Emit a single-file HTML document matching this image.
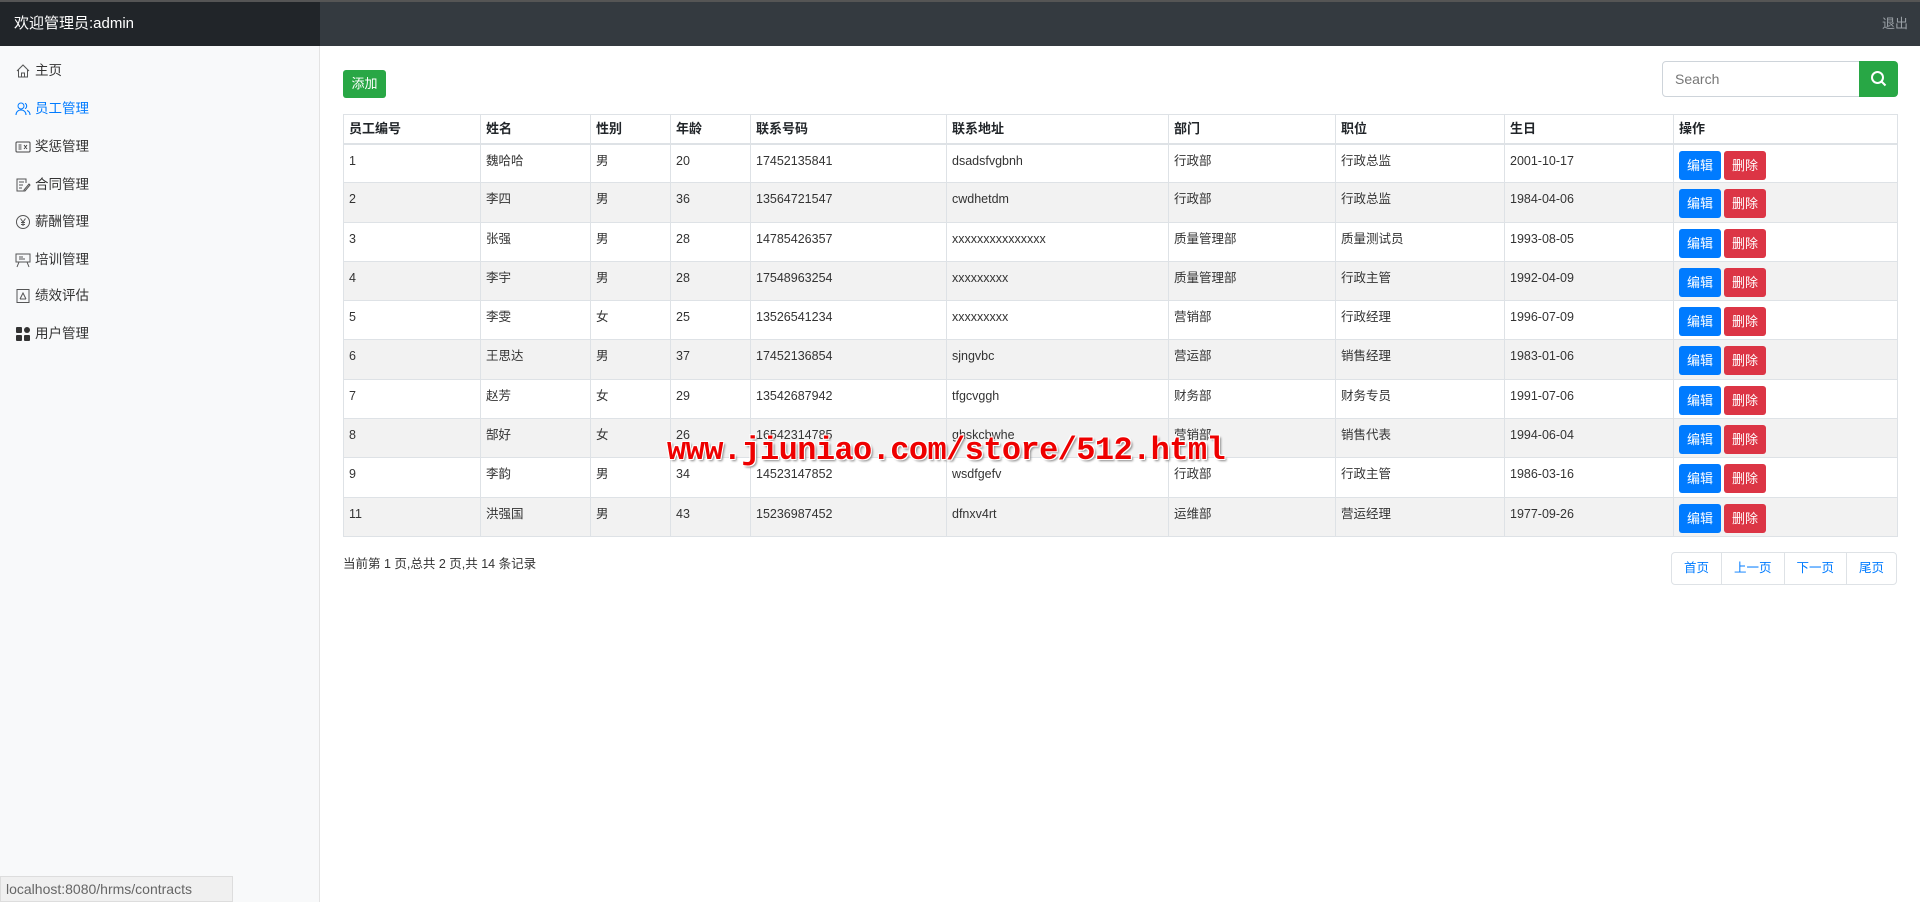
<!DOCTYPE html>
<html><head><meta charset="utf-8"><style>
*{box-sizing:border-box;margin:0;padding:0}
body{width:1920px;height:902px;overflow:hidden;background:#fff;font-family:"Liberation Sans","Noto Sans CJK SC",sans-serif;color:#212529;position:relative}
.top{position:absolute;left:0;top:0;width:1920px;height:46px;background:#343a40;border-top:2px solid #555}
.brand{position:absolute;left:0;top:0;width:320px;height:44px;background:#212529;color:#fff;font-size:15px;line-height:44px;padding-left:14px}
.logout{position:absolute;right:12px;top:0;line-height:44px;color:#9aa0a6;font-size:13px}
.side{position:absolute;left:0;top:46px;width:320px;height:856px;background:#f8f9fa;border-right:1px solid #e3e3e3}
.item{position:absolute;left:15px;font-size:13.5px;color:#333;height:20px;line-height:20px;display:flex;align-items:center}
.item svg{width:16px;height:16px;margin-right:4px}
.item.act{color:#007bff}
.add{position:absolute;left:343px;top:70px;width:43px;height:28px;background:#28a745;color:#fff;font-size:13px;line-height:28px;text-align:center;border-radius:3px}
.search{position:absolute;left:1662px;top:61px;width:198px;height:36px;border:1px solid #ced4da;border-radius:4px 0 0 4px;color:#777;font-size:14px;line-height:34px;padding-left:12px}
.sbtn{position:absolute;left:1859px;top:61px;width:39px;height:36px;background:#28a745;border-radius:0 4px 4px 0}
table{position:absolute;left:343px;top:114px;width:1555px;border-collapse:collapse;font-size:12.5px}
th,td{border:1px solid #dee2e6;text-align:left;padding:0 5px;vertical-align:top;line-height:18px}
th{height:29px;padding-top:5px;font-weight:bold;font-size:13px;border-bottom:2px solid #dee2e6}
td{height:39.3px;padding-top:7px;color:#333}
tr:nth-child(odd) td{background:#f2f2f2}
.b{display:inline-block;height:29px;width:42px;line-height:29px;text-align:center;color:#fff;border-radius:3px;font-size:13px;margin-top:-1px}
.e{background:#007bff}.d{background:#dc3545;margin-left:3px}
.info{position:absolute;left:343px;top:553px;font-size:12.5px;color:#333}
.pg{position:absolute;left:1671px;top:552px;height:33px;display:flex;border:1px solid #dee2e6;border-radius:4px}
.pg span{padding:0 12px;line-height:31px;font-size:12.5px;color:#007bff;border-left:1px solid #dee2e6}
.pg span:first-child{border-left:0}
.status{position:absolute;left:0;top:876px;width:233px;height:26px;background:#f0f0f0;border:1px solid #ddd;color:#666;font-size:14px;line-height:24px;padding-left:5px}
.wm{position:absolute;left:667px;top:432px;font-size:32px;font-weight:bold;color:#e00;letter-spacing:-0.6px;text-shadow:-1px -1px 0 #fff,1px -1px 0 #fff,-1px 1px 0 #fff,1px 1px 0 #fff,2px 2px 2px #888;font-family:"Liberation Mono",monospace}
</style></head><body>
<div class="top"><div class="brand">欢迎管理员:admin</div><div class="logout">退出</div></div>
<div class="side">
<div class="item" style="top:15px"><svg viewBox="0 0 16 16" fill="none" stroke="#555"><path d="M2 8L8 2l6 6M3.5 7v7h9V7M6.5 14v-4h3v4"/></svg>主页</div>
<div class="item act" style="top:53px"><svg viewBox="0 0 16 16" fill="none" stroke="#007bff"><circle cx="6" cy="5" r="3"/><path d="M1 14c0-3 2-5 5-5s5 2 5 5M10 2.3a3 3 0 010 5.4M12 9.5c2 .8 3 2.5 3 4.5"/></svg>员工管理</div>
<div class="item" style="top:91px"><svg viewBox="0 0 16 16" fill="none" stroke="#444"><rect x="1" y="3" width="14" height="10" rx="1"/><path d="M3.5 6h3M3.5 8h3M3.5 10h3M9 6l3 4M12 6l-3 4"/></svg>奖惩管理</div>
<div class="item" style="top:129px"><svg viewBox="0 0 16 16" fill="none" stroke="#555"><path d="M10 14H2V2h9v4M4 5h5M4 8h4M4 11h3M9 13l5-6 1 1-5 6H9z"/></svg>合同管理</div>
<div class="item" style="top:166px"><svg viewBox="0 0 16 16" fill="none" stroke="#555"><circle cx="8" cy="8" r="6.5"/><path d="M5.5 4.5L8 8l2.5-3.5M8 8v4M6 8.5h4M6 10.5h4"/></svg>薪酬管理</div>
<div class="item" style="top:204px"><svg viewBox="0 0 16 16" fill="none" stroke="#555"><path d="M1 2h14v8H1zM4 10l-2 5M12 10l2 5M4 5h4M4 7h6"/></svg>培训管理</div>
<div class="item" style="top:240px"><svg viewBox="0 0 16 16" fill="none" stroke="#555"><rect x="2" y="1.5" width="12" height="13"/><path d="M5 11h6M5 11l3-6 3 6"/></svg>绩效评估</div>
<div class="item" style="top:278px"><svg viewBox="0 0 16 16" fill="#333"><rect x="1" y="1" width="6" height="6" rx="1"/><rect x="1" y="9" width="6" height="6" rx="1"/><rect x="9" y="9" width="6" height="6" rx="1"/><circle cx="12" cy="4" r="3"/></svg>用户管理</div>
</div>
<div class="add">添加</div>
<div class="search">Search</div>
<div class="sbtn"><svg width="39" height="36" viewBox="0 0 39 36" fill="none" stroke="#fff" stroke-width="2"><circle cx="18.5" cy="16.5" r="5.5"/><path d="M22.5 20.5l4 4"/></svg></div>
<table>
<colgroup><col style="width:137px"><col style="width:110px"><col style="width:80px"><col style="width:80px"><col style="width:196px"><col style="width:222px"><col style="width:167px"><col style="width:169px"><col style="width:169px"><col></colgroup>
<tr><th>员工编号</th><th>姓名</th><th>性别</th><th>年龄</th><th>联系号码</th><th>联系地址</th><th>部门</th><th>职位</th><th>生日</th><th>操作</th></tr>
<tr><td>1</td><td>魏哈哈</td><td>男</td><td>20</td><td>17452135841</td><td>dsadsfvgbnh</td><td>行政部</td><td>行政总监</td><td>2001-10-17</td><td><span class="b e">编辑</span><span class="b d">删除</span></td></tr>
<tr><td>2</td><td>李四</td><td>男</td><td>36</td><td>13564721547</td><td>cwdhetdm</td><td>行政部</td><td>行政总监</td><td>1984-04-06</td><td><span class="b e">编辑</span><span class="b d">删除</span></td></tr>
<tr><td>3</td><td>张强</td><td>男</td><td>28</td><td>14785426357</td><td>xxxxxxxxxxxxxxx</td><td>质量管理部</td><td>质量测试员</td><td>1993-08-05</td><td><span class="b e">编辑</span><span class="b d">删除</span></td></tr>
<tr><td>4</td><td>李宇</td><td>男</td><td>28</td><td>17548963254</td><td>xxxxxxxxx</td><td>质量管理部</td><td>行政主管</td><td>1992-04-09</td><td><span class="b e">编辑</span><span class="b d">删除</span></td></tr>
<tr><td>5</td><td>李雯</td><td>女</td><td>25</td><td>13526541234</td><td>xxxxxxxxx</td><td>营销部</td><td>行政经理</td><td>1996-07-09</td><td><span class="b e">编辑</span><span class="b d">删除</span></td></tr>
<tr><td>6</td><td>王思达</td><td>男</td><td>37</td><td>17452136854</td><td>sjngvbc</td><td>营运部</td><td>销售经理</td><td>1983-01-06</td><td><span class="b e">编辑</span><span class="b d">删除</span></td></tr>
<tr><td>7</td><td>赵芳</td><td>女</td><td>29</td><td>13542687942</td><td>tfgcvggh</td><td>财务部</td><td>财务专员</td><td>1991-07-06</td><td><span class="b e">编辑</span><span class="b d">删除</span></td></tr>
<tr><td>8</td><td>郜好</td><td>女</td><td>26</td><td>16542314785</td><td>ghskcbwhe</td><td>营销部</td><td>销售代表</td><td>1994-06-04</td><td><span class="b e">编辑</span><span class="b d">删除</span></td></tr>
<tr><td>9</td><td>李韵</td><td>男</td><td>34</td><td>14523147852</td><td>wsdfgefv</td><td>行政部</td><td>行政主管</td><td>1986-03-16</td><td><span class="b e">编辑</span><span class="b d">删除</span></td></tr>
<tr><td>11</td><td>洪强国</td><td>男</td><td>43</td><td>15236987452</td><td>dfnxv4rt</td><td>运维部</td><td>营运经理</td><td>1977-09-26</td><td><span class="b e">编辑</span><span class="b d">删除</span></td></tr>
</table>
<div class="info">当前第 1 页,总共 2 页,共 14 条记录</div>
<div class="pg"><span>首页</span><span>上一页</span><span>下一页</span><span>尾页</span></div>
<div class="wm">www.jiuniao.com/store/512.html</div>
<div class="status">localhost:8080/hrms/contracts</div>
</body></html>
